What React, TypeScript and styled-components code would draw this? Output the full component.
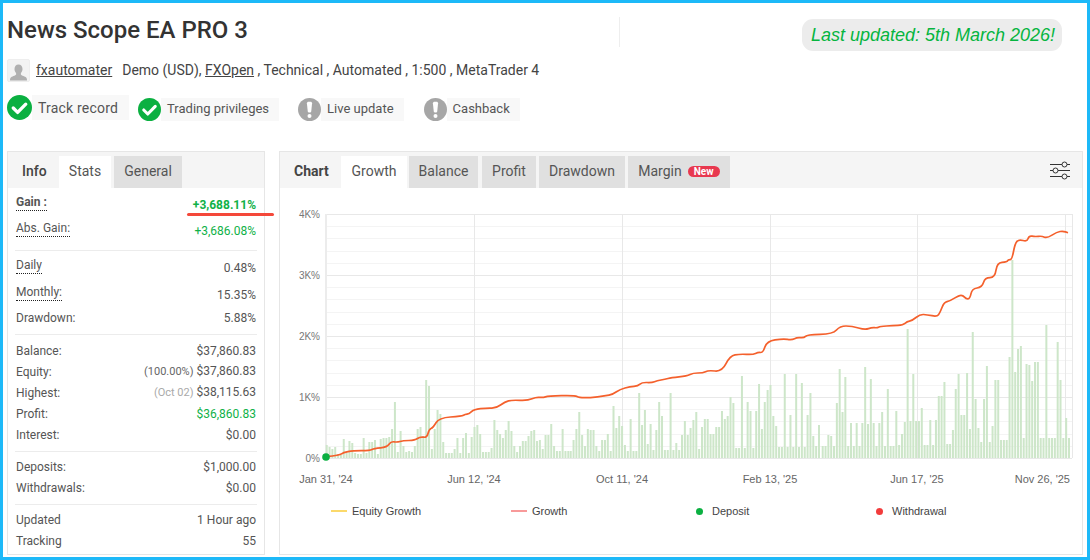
import React from "react";
import styled, { createGlobalStyle } from "styled-components";

const Global = createGlobalStyle`
  html, body { margin: 0; padding: 0; background: #fff; }
  #root { width: 1090px; height: 560px; }
  * { box-sizing: border-box; }
`;

const Frame = styled.div`
  width: 1090px;
  height: 560px;
  border: 3px solid #1db9f8;
  padding: 0 4px 2px 4px;
  background: #fff;
  display: flex;
  flex-direction: column;
  font-family: Roboto, "Liberation Sans", sans-serif;
  color: #555;
  overflow: hidden;
`;

const Header = styled.header`
  display: flex;
  align-items: flex-start;
  padding-top: 14px;
  height: 48px;
`;

const Title = styled.h1`
  margin: 0;
  width: 612px;
  font-size: 24px;
  line-height: 26px;
  font-weight: 500;
  color: #333;
`;

const HeaderRule = styled.div`
  width: 1px;
  height: 30px;
  background: #eee;
`;

const Updated = styled.div`
  margin: 2px 21px 0 auto;
  height: 32px;
  width: 260px;
  padding-left: 2px;
  border-radius: 11px;
  background: #ececec;
  display: flex;
  align-items: center;
  justify-content: center;
  font-family: "Liberation Sans", Arial, sans-serif;
  font-style: italic;
  font-size: 18px;
  color: #06b53f;
  white-space: nowrap;
`;

const Meta = styled.div`
  display: flex;
  align-items: center;
  height: 23px;
  padding-bottom: 2px;
  margin-top: 8px;
  font-size: 14px;
  color: #444;
  white-space: pre;
`;

const Avatar = styled.div`
  flex: none;
  align-self: flex-start;
  width: 23px;
  height: 23px;
  margin-right: 6px;
  background: #f3f3f3;
  border: 1px solid #eee;
  border-radius: 2px;
  display: flex;
`;

const MetaLink = styled.a`
  color: #444;
  text-decoration: underline;
`;

const MetaText = styled.span<{ $gap?: number }>`
  margin-left: ${(p) => p.$gap ?? 0}px;
`;

const Badges = styled.div`
  display: flex;
  align-items: flex-start;
  height: 26px;
  margin-top: 13px;
`;

const Badge = styled.div<{ $left?: number; $top?: number }>`
  display: flex;
  align-items: center;
  margin-left: ${(p) => p.$left ?? 0}px;
  margin-top: ${(p) => p.$top ?? 0}px;
`;

const BadgeLabel = styled.span<{ $size: number; $height: number; $right: number; $lift?: number; $track?: number }>`
  height: ${(p) => p.$height}px;
  display: flex;
  align-items: center;
  padding: 0 ${(p) => p.$right}px ${(p) => p.$lift ?? 0}px 6px;
  font-size: ${(p) => p.$size}px;
  letter-spacing: ${(p) => p.$track ?? 0}px;
  color: #555;
  background: #f8f8f8;
`;

const Panels = styled.div`
  flex: 1;
  margin-top: 30px;
  display: flex;
  gap: 14px;
  min-height: 0;
`;

const Panel = styled.section<{ $width?: number }>`
  ${(p) => (p.$width ? `width: ${p.$width}px;` : "flex: 1;")}
  border: 1px solid #e6e6e6;
  background: #fff;
  display: flex;
  flex-direction: column;
  min-width: 0;
`;

const TabBar = styled.div`
  height: 36px;
  flex: none;
  background: #f5f5f5;
  display: flex;
  align-items: flex-end;
  position: relative;
`;

const TabTitle = styled.div<{ $pad: number; $width: number; $bold?: boolean }>`
  width: ${(p) => p.$width}px;
  padding-left: ${(p) => p.$pad}px;
  height: 32px;
  line-height: 30px;
  font-size: 14px;
  font-weight: ${(p) => (p.$bold ? 700 : 500)};
  color: #444;
`;

const Tab = styled.div<{ $active?: boolean; $width: number; $left?: number }>`
  width: ${(p) => p.$width}px;
  height: 32px;
  margin-left: ${(p) => p.$left ?? 0}px;
  background: ${(p) => (p.$active ? "#fff" : "#e0e0e0")};
  font-size: 14px;
  line-height: 30px;
  color: #555;
  display: flex;
  justify-content: center;
  gap: 6px;
`;

const NewTag = styled.span`
  align-self: flex-start;
  margin-top: 10px;
  width: 32px;
  height: 11px;
  border-radius: 6px;
  background: #e8384f;
  color: #fff;
  font-size: 10px;
  line-height: 11px;
  font-weight: 700;
  text-align: center;
`;

const Settings = styled.div`
  position: absolute;
  right: 11px;
  top: 8px;
  width: 22px;
  height: 20px;
`;

const StatGroup = styled.div<{ $pad: number; $last?: boolean }>`
  margin: 0 7px;
  padding: ${(p) => p.$pad}px 0 ${(p) => (p.$last ? 0 : 6)}px;
  border-bottom: ${(p) => (p.$last ? "none" : "1px solid #ececec")};
`;

const Row = styled.div<{ $height: number }>`
  height: ${(p) => p.$height}px;
  display: flex;
  align-items: center;
  justify-content: space-between;
  padding: 0 1px;
  font-size: 12px;
  line-height: 14px;
  position: relative;
  color: #555;
`;

const Key = styled.span<{ $hint?: boolean; $strong?: boolean }>`
  font-weight: ${(p) => (p.$strong ? 700 : 400)};
  ${(p) =>
    p.$hint
      ? `border-bottom: 1px dotted #222; margin-top: -4px; padding-bottom: 1px;`
      : ""}
`;

const Value = styled.span<{ $green?: boolean; $strong?: boolean }>`
  color: ${(p) => (p.$green ? "#10b148" : "#555")};
  font-weight: ${(p) => (p.$strong ? 700 : 400)};
`;

const Note = styled.span<{ $faint?: boolean }>`
  color: ${(p) => (p.$faint ? "#aaa" : "#666")};
  font-size: 11px;
  margin-right: 3px;
`;

const RedMark = styled.div`
  position: absolute;
  left: 172px;
  top: 21px;
  width: 87px;
  height: 3px;
  border-radius: 2px;
  background: #f4483a;
`;

const ChartSvg = styled.svg`
  display: block;
  flex: none;
  width: 802px;
  height: 315px;
`;

const AxisText = styled.text`
  font-family: "Liberation Sans", Arial, sans-serif;
  font-size: 11px;
  fill: #666;
`;

const YText = styled(AxisText)`
  font-size: 10px;
  fill: #777;
`;

const Legend = styled.div`
  display: flex;
  height: 16px;
  padding-left: 51px;
`;

const LegendItem = styled.div`
  width: 180px;
  display: flex;
  align-items: center;
  gap: 5px;
  font-family: "Liberation Sans", Arial, sans-serif;
  font-size: 11px;
  color: #444;
`;

const Swatch = styled.span`
  width: 16px;
  height: 16px;
  display: flex;
  align-items: center;
  justify-content: center;
`;

const Dash = styled.span<{ $color: string }>`
  display: block;
  width: 16px;
  height: 2px;
  background: ${(p) => p.$color};
`;

const Dot = styled.span<{ $color: string }>`
  display: block;
  width: 7px;
  height: 7px;
  border-radius: 50%;
  background: ${(p) => p.$color};
`;

const Check = ({ size }: { size: number }) => (
  <svg width={size} height={size} viewBox="0 0 24 24">
    <circle cx="12" cy="12" r="12" fill="#0bb041" />
    <path d="M6 12.5l4.2 4.2L18 8.8" fill="none" stroke="#fff" strokeWidth="3.2" strokeLinecap="round" strokeLinejoin="round" />
  </svg>
);

const Warn = ({ size }: { size: number }) => (
  <svg width={size} height={size} viewBox="0 0 24 24">
    <circle cx="12" cy="12" r="12" fill="#a6a6a6" />
    <path d="M9.300 5.500c0-1 .8-1.700 1.700-1.700h2c1 0 1.700.7 1.700 1.700l-.9 8.500c-.1.700-.6 1.100-1.200 1.100h-1.200c-.6 0-1.100-.4-1.200-1.100z" fill="#fff" />
    <circle cx="12" cy="18.800" r="2.100" fill="#fff" />
  </svg>
);

const Person = () => (
  <svg width="21" height="21" viewBox="0 0 21 21">
    <path
      fill="#b0b0b0"
      transform="translate(0 1.500)"
      d="M10.500 3c2.500 0 4 1.900 4 4.500 0 1.700-.7 3.200-1.600 4.100v1.500c0 .8 3.200 1.500 5 2.700.8.600 1.100 1.400 1.100 3.200H2c0-1.800.3-2.600 1.100-3.200 1.800-1.200 5-1.900 5-2.700v-1.500C7.200 10.700 6.500 9.200 6.500 7.500 6.500 4.900 8 3 10.500 3z"
    />
  </svg>
);

const SLIDERS = [
  { y: 4.5, cx: 15.5 },
  { y: 10.5, cx: 6.5 },
  { y: 16.5, cx: 15.5 },
];

const SlidersIcon = () => (
  <svg width="22" height="20" viewBox="0 0 22 20">
    {SLIDERS.map((s) => (
      <g key={s.y}>
        <path d={`M1 ${s.y}H21`} stroke="#333" strokeWidth="1" />
        <circle cx={s.cx} cy={s.y} r="2.5" fill="#f5f5f5" stroke="#333" strokeWidth="1" />
      </g>
    ))}
  </svg>
);

const S1 = [13,11,9,11,4,3,19,5,17,15,5,4,4,20,5,16,16,18,4,19,20,20,21,29,56,6,27,12,6,7,6,12,29,31,22,78,72,9,29,48,44,16,5,5,5,9,20,5,20,25,5,21,31,33,24,6,6,6,10,38,28,24,20,28,37,27,12,6,12,17,17,22,27,28,17,18,9,23,23,34,12,7,7,29,7,7];
const S2 = [7,18,29,46,23,12,29,28,28,12,7,18,18,24,7,52,30,42,32,13,7,39,7,7,65,33,48,14,34,8,28,56,42,8,8,65,8,15,8,23,37,23,30,38,46,9,31,39,39,24,24,31,31,47,39,42,61,55,10,10,82,10,56,47,10,47,74,29,56,68,73,42,32,11,11,84,11,43,11,84,11,75,11,43,65,22,12,33];
const S3 = [12,12,23,22,12,55,89,46,81,12,35,12,35,12,35,91,34,79,35,12,35,46,12,69,12,12,47,13,24,36,129,37,84,37,37,50,13,13,38,13,38,62,62,76,14,14,28,69,84,43,43,85,29,126,59,30,16,59,92,16,32,78,78,18,18,18,101,198,86,109,112,20,94,93,77,96,96,20,20,133,20,20,20,116,78,20,40,20];

const sections: [number[], number, number][] = [
  [S1, 326.7, 568.3],
  [S2, 570.7, 819],
  [S3, 822.7, 1069],
];

const BARS = sections.flatMap(([h, from, to]) =>
  h.map((v, i) => ({ x: from + ((to - from) * i) / (h.length - 1), h: v }))
);

const LINE: [number, number][] = [
  [326.3,456.7],[340,455],[343,452.7],[353,450.7],[370,450.7],[374,448.3],[387,447.3],[391,441.3],[397,442.3],[403,440.7],[415,440.3],[420,436.7],[427,437.7],[429,429.3],[433,427.7],[439,417.7],[462,416.3],[465,414.3],[469,414],[474,409.3],[487,408],[496,408.3],[505,401.7],[512,400],[528,400.7],[536,397],[543,397.7],[548,396],[575,395.3],[579,397.7],[590,397.7],[605,396],[613,394.3],[620,389.3],[630,386.7],[638,386],[642,382.3],[652,382.7],[657,380.7],[665,379.3],[671,377.7],[687,376],[693,373],[703,373],[708,370.3],[722,371.7],[730,355.7],[740,354],[753,354.7],[758,352.3],[763,352.7],[767,341],[783,338.7],[792,340],[797,337.3],[804,338],[807,334.7],[833,334],[840,326],[852,326],[865,330],[872,327.3],[877,328],[880,326.3],[893,325.7],[903,325],[907,321.7],[912,320.7],[920,314.3],[927,314.7],[937,316.7],[940,312.7],[944,302.3],[950,301],[959,295.3],[963,295.3],[966,299],[970,298.7],[972,288.7],[982,287.3],[985,277.7],[995,277.7],[997,262.7],[1007,262],[1008,259.7],[1012,259.7],[1015,243.3],[1019,239.3],[1027,241.7],[1029,235.7],[1035,236.7],[1042,236],[1047,238.3],[1057,232],[1063,231],[1068,232.7],
];

const smoothPath = (pts: [number, number][]) => {
  let d = `M${pts[0][0]} ${pts[0][1]}`;
  for (let i = 1; i < pts.length - 1; i++) {
    const mx = (pts[i][0] + pts[i + 1][0]) / 2;
    const my = (pts[i][1] + pts[i + 1][1]) / 2;
    d += `Q${pts[i][0]} ${pts[i][1]} ${mx} ${my}`;
  }
  const last = pts[pts.length - 1];
  return `${d}L${last[0]} ${last[1]}`;
};

const MAJOR = [214, 275, 336, 397, 458];
const MINOR = [0, 1, 2, 3].flatMap((m) => [1, 2, 3, 4].map((k) => Math.round(214 + m * 61 + k * 12.2)));
const VERTICAL = [474, 622, 770, 917, 1065, 1072];
const Y_LABELS = ["4K%", "3K%", "2K%", "1K%", "0%"];
const X_LABELS = [
  { x: 326, t: "Jan 31, '24" },
  { x: 474, t: "Jun 12, '24" },
  { x: 622, t: "Oct 11, '24" },
  { x: 770, t: "Feb 13, '25" },
  { x: 917, t: "Jun 17, '25" },
];

const Chart = () => (
  <ChartSvg viewBox="280 188 802 315">
    {MINOR.map((y) => (
      <path key={y} d={`M326 ${y + 0.5}H1072`} stroke="#f4f4f4" strokeWidth="1" />
    ))}
    {MAJOR.map((y) => (
      <path key={y} d={`M326 ${y + 0.5}H1072`} stroke="#e8e8e8" strokeWidth="1" />
    ))}
    {VERTICAL.map((x) => (
      <path key={x} d={`M${x + 0.5} 214V458`} stroke="#e8e8e8" strokeWidth="1" />
    ))}
    <path d="M326 214V458" stroke="#ececec" strokeWidth="2" />
    {BARS.map((b, i) => (
      <rect key={i} x={b.x - 1} y={458 - b.h} width="2" height={b.h} fill="#cde6c9" />
    ))}
    <path d={smoothPath(LINE)} fill="none" stroke="#f4602c" strokeWidth="1.7" strokeLinejoin="round" />
    <circle cx="326" cy="457" r="3.8" fill="#0bb041" />
    {Y_LABELS.map((t, i) => (
      <YText key={t} x="320" y={MAJOR[i] + 3.5} textAnchor="end">
        {t}
      </YText>
    ))}
    {X_LABELS.map((l) => (
      <AxisText key={l.t} x={l.x} y="483" textAnchor="middle">
        {l.t}
      </AxisText>
    ))}
    <AxisText x="1070" y="483" textAnchor="end">
      Nov 26, '25
    </AxisText>
  </ChartSvg>
);

export default function App() {
  return (
    <Frame>
      <Global />
      <Header>
        <Title>News Scope EA PRO 3</Title>
        <HeaderRule />
        <Updated>Last updated: 5th March 2026!</Updated>
      </Header>

      <Meta>
        <Avatar>
          <Person />
        </Avatar>
        <MetaLink>fxautomater</MetaLink>
        <MetaText $gap={10}>Demo (USD), </MetaText>
        <MetaLink>FXOpen</MetaLink>
        <MetaText> , Technical , Automated , 1:500 , MetaTrader 4</MetaText>
      </Meta>

      <Badges>
        <Badge>
          <Check size={25} />
          <BadgeLabel $size={14} $height={25} $right={11} $track={0.2}>Track record</BadgeLabel>
        </Badge>
        <Badge $left={9} $top={3}>
          <Check size={23} />
          <BadgeLabel $size={13} $height={23} $right={10} $lift={2}>Trading privileges</BadgeLabel>
        </Badge>
        <Badge $left={19} $top={3}>
          <Warn size={23} />
          <BadgeLabel $size={13} $height={23} $right={10} $lift={2}>Live update</BadgeLabel>
        </Badge>
        <Badge $left={20} $top={3}>
          <Warn size={23} />
          <BadgeLabel $size={13} $height={23} $right={10} $lift={2}>Cashback</BadgeLabel>
        </Badge>
      </Badges>

      <Panels>
        <Panel $width={258}>
          <TabBar>
            <TabTitle $pad={14} $width={51}>Info</TabTitle>
            <Tab $active $width={52}>Stats</Tab>
            <Tab $width={68} $left={3}>General</Tab>
          </TabBar>
          <StatGroup $pad={4}>
            <Row $height={26}>
              <Key $hint $strong>Gain :</Key>
              <Value $green $strong>+3,688.11%</Value>
              <RedMark />
            </Row>
            <Row $height={26}>
              <Key $hint>Abs. Gain:</Key>
              <Value $green>+3,686.08%</Value>
            </Row>
          </StatGroup>
          <StatGroup $pad={4}>
            <Row $height={26}>
              <Key $hint>Daily</Key>
              <Value>0.48%</Value>
            </Row>
            <Row $height={27}>
              <Key $hint>Monthly:</Key>
              <Value>15.35%</Value>
            </Row>
            <Row $height={20}>
              <Key>Drawdown:</Key>
              <Value>5.88%</Value>
            </Row>
          </StatGroup>
          <StatGroup $pad={5}>
            <Row $height={21}>
              <Key>Balance:</Key>
              <Value>$37,860.83</Value>
            </Row>
            <Row $height={21}>
              <Key>Equity:</Key>
              <Value><Note>(100.00%)</Note>$37,860.83</Value>
            </Row>
            <Row $height={21}>
              <Key>Highest:</Key>
              <Value><Note $faint>(Oct 02)</Note>$38,115.63</Value>
            </Row>
            <Row $height={21}>
              <Key>Profit:</Key>
              <Value $green>$36,860.83</Value>
            </Row>
            <Row $height={21}>
              <Key>Interest:</Key>
              <Value>$0.00</Value>
            </Row>
          </StatGroup>
          <StatGroup $pad={4}>
            <Row $height={21}>
              <Key>Deposits:</Key>
              <Value>$1,000.00</Value>
            </Row>
            <Row $height={21}>
              <Key>Withdrawals:</Key>
              <Value>$0.00</Value>
            </Row>
          </StatGroup>
          <StatGroup $pad={4} $last>
            <Row $height={21}>
              <Key>Updated</Key>
              <Value>1 Hour ago</Value>
            </Row>
            <Row $height={21}>
              <Key>Tracking</Key>
              <Value>55</Value>
            </Row>
          </StatGroup>
        </Panel>

        <Panel>
          <TabBar>
            <TabTitle $pad={14} $width={61} $bold>Chart</TabTitle>
            <Tab $active $width={66}>Growth</Tab>
            <Tab $width={69} $left={2}>Balance</Tab>
            <Tab $width={54} $left={4}>Profit</Tab>
            <Tab $width={86} $left={3}>Drawdown</Tab>
            <Tab $width={102} $left={3}>
              Margin
              <NewTag>New</NewTag>
            </Tab>
            <Settings>
              <SlidersIcon />
            </Settings>
          </TabBar>
          <Chart />
          <Legend>
            <LegendItem>
              <Swatch><Dash $color="#fbd96b" /></Swatch>
              Equity Growth
            </LegendItem>
            <LegendItem>
              <Swatch><Dash $color="#f89a9a" /></Swatch>
              Growth
            </LegendItem>
            <LegendItem>
              <Swatch><Dot $color="#0bb041" /></Swatch>
              Deposit
            </LegendItem>
            <LegendItem>
              <Swatch><Dot $color="#f23c3c" /></Swatch>
              Withdrawal
            </LegendItem>
          </Legend>
        </Panel>
      </Panels>
    </Frame>
  );
}
